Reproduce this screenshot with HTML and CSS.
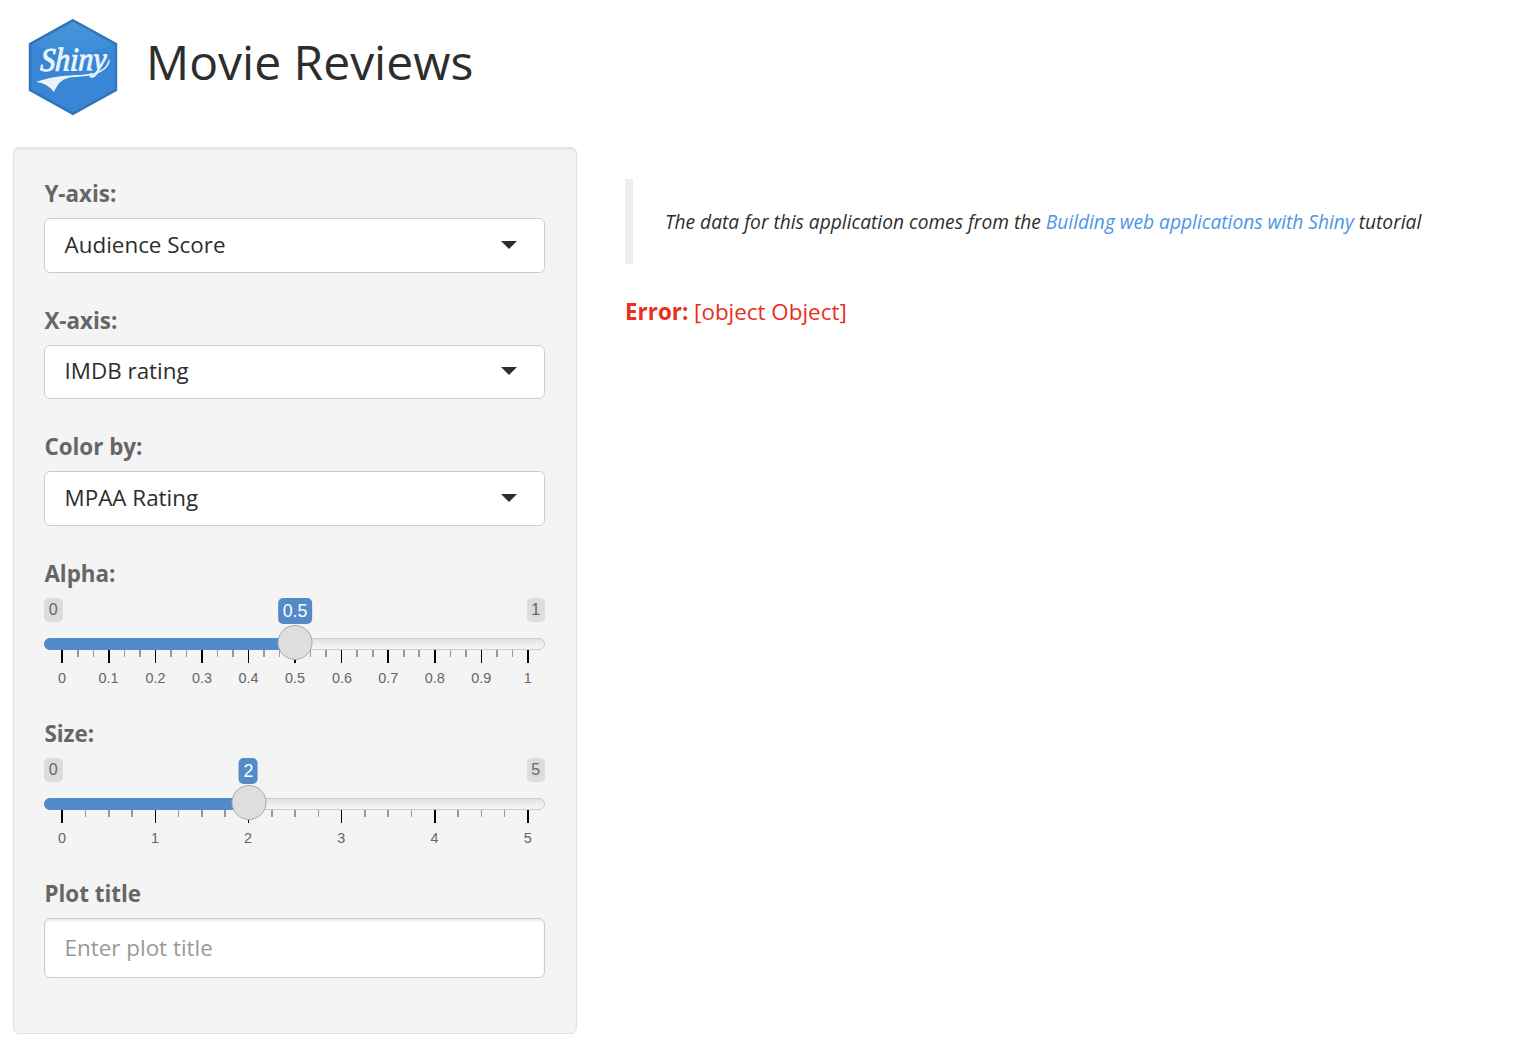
FILE: index.html
```html
<!DOCTYPE html>
<html lang="en">
<head>
<meta charset="utf-8">
<title>Movie Reviews</title>
<link rel="stylesheet" href="styles.css">
</head>
<body>
<header class="header">
  <svg class="logo" width="90" height="98" viewBox="0 0 90 98" role="img" aria-label="Shiny">
    <defs>
      <linearGradient id="hex" x1="0" y1="0" x2="0" y2="1"><stop offset="0" stop-color="#4796da"/><stop offset="1" stop-color="#3d8bd6"/></linearGradient>
    </defs>
    <path d="M45 2.2 88 26V72L45 95.8 2 72V26Z" fill="#3986d6" stroke="#3075bb" stroke-width="2.4"/>
    <path d="M45 4 85 26Q45 45 5 26Z" fill="url(#hex)"/>
    <text class="wordmark" transform="translate(12 53) rotate(-1) skewX(-4)" textLength="66" lengthAdjust="spacingAndGlyphs">Shiny</text>
    <path d="M81 41C83 43 80 49 76 52C67 58 58 58 46 59C34 60 30 65 26 74C22 69 17 65 8 64C22 59 34 58 48 57C60 57 70 55 76 50C79 47 80 44 81 41Z" fill="#eaf4fa"/>
  </svg>
  <h1 class="title">Movie Reviews</h1>
</header>
<div class="layout">
  <form class="well">
    <div class="group">
      <label class="label">Y-axis:</label>
      <div class="select"><span>Audience Score</span><i class="caret"></i></div>
    </div>
    <div class="group">
      <label class="label">X-axis:</label>
      <div class="select"><span>IMDB rating</span><i class="caret"></i></div>
    </div>
    <div class="group">
      <label class="label">Color by:</label>
      <div class="select"><span>MPAA Rating</span><i class="caret"></i></div>
    </div>
    <div class="group slider-group">
      <label class="label">Alpha:</label>
      <div class="slider">
        <div class="limits"><span>0</span><span>1</span></div>
        <div class="track"><div class="fill" style="width:50%"></div></div>
        <svg class="scale" width="501" height="40" viewBox="0 0 501 40">
          <path class="minor" d="M33 0h2v7h-2zM49 0h1v7h-1zM80 0h1v7h-1zM95 0h2v7h-2zM126 0h2v7h-2zM142 0h1v7h-1zM173 0h1v7h-1zM188 0h2v7h-2zM219 0h2v7h-2zM235 0h1v7h-1zM266 0h1v7h-1zM281 0h2v7h-2zM312 0h2v7h-2zM328 0h2v7h-2zM359 0h2v7h-2zM374 0h2v7h-2zM406 0h1v7h-1zM421 0h2v7h-2zM452 0h2v7h-2zM468 0h1v7h-1z"/>
          <path class="major" d="M17 0h2v13h-2zM64 0h2v13h-2zM111 0h1v13h-1zM157 0h2v13h-2zM204 0h1v13h-1zM250 0h2v13h-2zM297 0h1v13h-1zM343 0h2v13h-2zM390 0h2v13h-2zM437 0h1v13h-1zM483 0h2v13h-2z"/>
          <g class="ticks"><text x="18" y="33">0</text><text x="64.6" y="33">0.1</text><text x="111.5" y="33">0.2</text><text x="158" y="33">0.3</text><text x="204.5" y="33">0.4</text><text x="251" y="33">0.5</text><text x="298" y="33">0.6</text><text x="344.3" y="33">0.7</text><text x="390.8" y="33">0.8</text><text x="437.3" y="33">0.9</text><text x="483.7" y="33">1</text></g>
        </svg>
        <span class="value" style="left:251px">0.5</span>
        <span class="handle" style="left:250.5px"></span>
      </div>
    </div>
    <div class="group slider-group">
      <label class="label">Size:</label>
      <div class="slider">
        <div class="limits"><span>0</span><span>5</span></div>
        <div class="track"><div class="fill" style="width:40%"></div></div>
        <svg class="scale" width="501" height="40" viewBox="0 0 501 40">
          <path class="minor" d="M41 0h1v7h-1zM64 0h2v7h-2zM87 0h2v7h-2zM134 0h1v7h-1zM157 0h2v7h-2zM180 0h2v7h-2zM227 0h2v7h-2zM250 0h2v7h-2zM274 0h1v7h-1zM320 0h2v7h-2zM343 0h2v7h-2zM367 0h1v7h-1zM413 0h2v7h-2zM437 0h1v7h-1zM460 0h1v7h-1z"/>
          <path class="major" d="M17 0h2v13h-2zM111 0h1v13h-1zM204 0h1v13h-1zM297 0h1v13h-1zM390 0h2v13h-2zM483 0h2v13h-2z"/>
          <g class="ticks"><text x="18" y="33">0</text><text x="111" y="33">1</text><text x="204" y="33">2</text><text x="297.3" y="33">3</text><text x="390.5" y="33">4</text><text x="483.7" y="33">5</text></g>
        </svg>
        <span class="value" style="left:204.4px">2</span>
        <span class="handle" style="left:204.5px"></span>
      </div>
    </div>
    <div class="group last">
      <label class="label" for="plot-title">Plot title</label>
      <input class="input" id="plot-title" type="text" placeholder="Enter plot title">
    </div>
  </form>
  <main class="main">
    <blockquote class="quote"><em>The data for this application comes from the <a class="link">Building web applications with Shiny</a> tutorial</em></blockquote>
    <p class="error"><strong>Error:</strong> [object Object]</p>
  </main>
</div>
</body>
</html>
```
FILE: styles.css
```css
* { box-sizing: border-box; }
body { margin: 0; background: #fff; color: #2d2d2d; font-family: "Open Sans", sans-serif; font-size: 22.4px; }
.header { display: flex; height: 147px; padding: 18px 0 0 28px; }
.logo { flex: none; }
.wordmark { font: italic 33px "Liberation Serif", serif; fill: #eaf4fa; stroke: #eaf4fa; stroke-width: 1px; }
.title { margin: 9px 0 0 28px; font-size: 48px; font-weight: 400; line-height: 70px; white-space: nowrap; }
.layout { display: flex; align-items: flex-start; padding-left: 13px; }
.well { width: 564px; height: 887px; padding: 30px 31px 0 30px; border: 1px solid #e1e1e1; border-radius: 6px; background: #f4f4f4; box-shadow: inset 0 2px 2px rgba(0,0,0,.05); }
.group { height: 126.67px; }
.slider-group { height: 160px; }
.label { display: block; height: 40px; padding-left: .4px; line-height: 32px; font-weight: 700; color: #666; }
.select { display: flex; align-items: center; justify-content: space-between; width: 501px; height: 54.6px; padding: 0 27px 2.2px 19.6px; background: #fff; border: 1px solid #ccc; border-radius: 6px; }
.caret { margin-top: 1px; border: 8px solid transparent; border-top-color: #2d2d2d; border-bottom: 0; }
.input { display: block; width: 501px; height: 60px; padding: 0 19.6px; border: 1px solid #ccc; border-radius: 6px; background: #fff; font: inherit; box-shadow: inset 0 2px 2px rgba(0,0,0,.075); }
.input::placeholder { color: #999; opacity: 1; }
.slider { position: relative; width: 501px; font-family: "Liberation Sans", Arial, sans-serif; }
.limits { display: flex; justify-content: space-between; height: 40px; }
.limits span { height: 24px; padding: 0 4.8px; border-radius: 5px; background: #dcdcdc; color: #666; font-size: 16px; line-height: 23px; }
.track { height: 12px; border: 1px solid #ccc; border-radius: 6px; background: linear-gradient(#e2e2e2, #f7f7f7); }
.fill { height: 12px; margin: -1px; border-radius: 6px 0 0 6px; background: #548ac7; }
.scale { display: block; }
.minor { fill: #999; }
.major { fill: #000; }
.ticks { fill: #666; font-size: 14.4px; text-anchor: middle; }
.value { position: absolute; top: 0; height: 26px; padding: 0 4.5px; transform: translateX(-50%); border-radius: 5px; background: #548ac7; color: #fff; font-size: 17.8px; line-height: 26px; }
.handle { position: absolute; top: 27px; width: 35px; height: 35px; transform: translateX(-50%); border: 1px solid #ababab; border-radius: 50%; background: #dedede; }
.main { padding: 32px 0 0 48px; }
.quote { display: flex; align-items: center; height: 85px; margin: 0; padding: 0 0 0 32px; border-left: 8px solid #eee; font-size: 19.17px; white-space: nowrap; }
.link { color: #4b95e6; }
.error { margin: 32px 0 0; line-height: 32px; color: #e8301f; }
```
